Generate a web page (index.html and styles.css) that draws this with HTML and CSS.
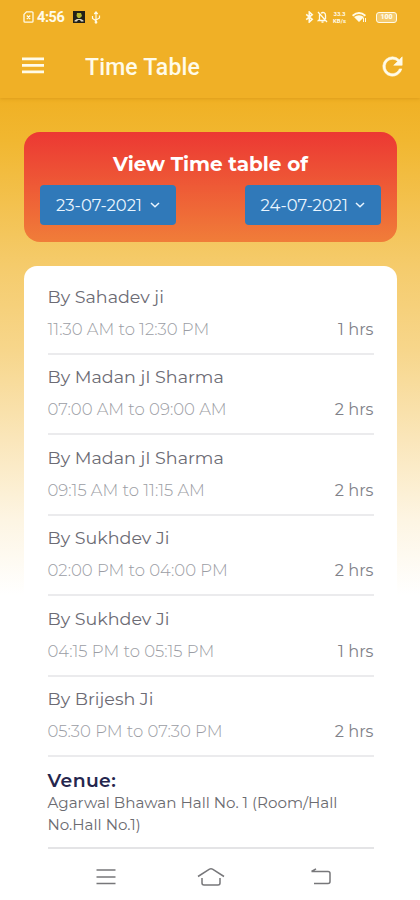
FILE: index.html
```html
<!DOCTYPE html>
<html lang="en">
<head>
<meta charset="utf-8">
<title>Time Table</title>
<link rel="stylesheet" href="styles.css">
</head>
<body>
<div class="screen">
  <header class="top">
    <div class="status">
      <svg class="sim" width="11" height="12" viewBox="0 0 11 12" fill="none" stroke="currentColor" stroke-width="1.3"><path d="M3.5 .8H9a1 1 0 0 1 1 1v8.4a1 1 0 0 1-1 1H2a1 1 0 0 1-1-1V3.4zM3.8 4.5l3.4 3.6M7.2 4.5L3.8 8.1"/></svg>
      <span class="clock">4:56</span>
      <svg class="app" width="12" height="12" viewBox="0 0 12 12"><path fill="#222018" d="M0 0h12v12H0z"/><path fill="#b5b52d" d="M4 2h4l1 3-2 2H5L3.500 5z"/><path fill="#d9d5c5" d="M1.500 9.500L4 8h4l2.500 1.500v1H8L7 9H5l-1 1.500H1.500z"/></svg>
      <svg class="usb" width="10" height="13" viewBox="0 0 10 13" fill="none" stroke="currentColor" stroke-width="1.2"><path d="M5 1.500v10M3.300 3L5 1l1.700 2M1.500 5v2.500L5 9.800M8.500 4.500V7L5 9"/><circle cx="5" cy="11.300" r=".8"/></svg>
      <span class="grow"></span>
      <svg class="bt" width="9" height="12" viewBox="0 0 9 12" fill="none" stroke="currentColor" stroke-width="1.600"><path d="M1.200 3.300l6 5L4.300 11V1l2.900 2.700-6 5"/></svg>
      <svg class="bell" width="11" height="12" viewBox="0 0 11 12" fill="none" stroke="currentColor" stroke-width="1.300"><path d="M1 1l9 10M2.500 3.500V8.500L1.500 9.500H8M4 2.200c2-1.500 4.500-.5 4.500 2V8M4.500 11.200h2"/></svg>
      <span class="rate"><b>33.3</b><b>KB/s</b></span>
      <svg class="wifi" width="15" height="12" viewBox="0 0 15 12"><path fill="currentColor" d="M0 4Q7-2 14 4l-1.200 1.400Q7 .8 1.200 5.400zM2 6Q7 2.300 12 6L7 11z"/><path stroke="currentColor" d="M11.500 7v4M13.500 7v4"/></svg>
      <span class="battery">100</span>
    </div>
    <div class="appbar">
      <svg class="menu" width="22" height="17" viewBox="0 0 22 17" fill="currentColor"><path d="M0 .4h22v2.800H0zM0 7h22v2.800H0zM0 13.500h22v2.800H0z"/></svg>
      <h1>Time Table</h1>
      <svg class="refresh" width="29" height="29" viewBox="0 0 24 24" fill="currentColor" stroke="currentColor" stroke-width=".5"><path d="M17.650 6.350A7.958 7.958 0 0 0 12 4a8 8 0 1 0 7.730 10h-2.080A6 6 0 1 1 12 6c1.660 0 3.140.69 4.220 1.780L13 11h7V4z"/></svg>
    </div>
  </header>
  <section class="range">
    <h2>View Time table of</h2>
    <div class="dates">
      <button><span>23-07-2021</span><svg width="10" height="6" viewBox="0 0 10 6" fill="none" stroke="currentColor" stroke-width="1.500"><path d="M1 1l4 3.800L9 1"/></svg></button>
      <button><span>24-07-2021</span><svg width="10" height="6" viewBox="0 0 10 6" fill="none" stroke="currentColor" stroke-width="1.500"><path d="M1 1l4 3.800L9 1"/></svg></button>
    </div>
  </section>
  <main class="card">
    <article><h3>By Sahadev ji</h3><p><span>11:30 AM to 12:30 PM</span><em>1 hrs</em></p></article>
    <article><h3>By Madan jI Sharma</h3><p><span>07:00 AM to 09:00 AM</span><em>2 hrs</em></p></article>
    <article><h3>By Madan jI Sharma</h3><p><span>09:15 AM to 11:15 AM</span><em>2 hrs</em></p></article>
    <article><h3>By Sukhdev Ji</h3><p><span>02:00 PM to 04:00 PM</span><em>2 hrs</em></p></article>
    <article><h3>By Sukhdev Ji</h3><p><span>04:15 PM to 05:15 PM</span><em>1 hrs</em></p></article>
    <article><h3>By Brijesh Ji</h3><p><span>05:30 PM to 07:30 PM</span><em>2 hrs</em></p></article>
    <div class="venue"><h4>Venue:</h4><div>Agarwal Bhawan Hall No. 1 (Room/Hall<br>No.Hall No.1)</div></div>
  </main>
  <nav class="system">
    <svg width="20" height="18" viewBox="0 0 20 18" fill="none" stroke="currentColor" stroke-width="1.600"><path d="M.5 2h19M.5 9h19M.5 15.500h19"/></svg>
    <svg class="home" width="28" height="20" viewBox="0 0 28 20" fill="none" stroke="currentColor" stroke-width="1.500"><path d="M1 9.500L12.500 2.200q1.500-.8 3 0L27 9.500M5 11v5q0 2 2 2h14q2 0 2-2v-5"/></svg>
    <svg width="22" height="18" viewBox="0 0 22 18" fill="none" stroke="currentColor" stroke-width="1.500"><path d="M1.500 3.500h16.500q2 0 2 2v8q0 2-2 2H4M6 .8L1.500 3.500"/></svg>
  </nav>
</div>
</body>
</html>
```
FILE: styles.css
```css
* { box-sizing: border-box; }
body, h1, h2, h3, h4, p { margin: 0; }
body { background: #fff; font-family: Montserrat, Inter, sans-serif; }
svg { display: block; flex: none; }
.screen {
  width: 420px; height: 900px; overflow: hidden;
  display: flex; flex-direction: column;
  background: linear-gradient(#f0b125 100px, #f1b730 140px, #f5cb6b 265px, #f7d68b 350px, #fae6ba 440px, #fdf5e3 520px, #fff 595px);
}
.top { height: 98px; flex: none; background: #f0b026; color: #fffbe9; box-shadow: 0 1px 3px #c98b1580; font-family: Roboto, sans-serif; }
.status { height: 34px; display: flex; align-items: center; padding: 0 23px; }
.clock { font-size: 14.5px; font-weight: 700; letter-spacing: -.4px; margin: 0 9px 0 3px; }
.usb { margin-left: 6px; }
.grow { flex: 1; }
.bell { margin-left: 3px; }
.rate { display: flex; flex-direction: column; margin-left: 4px; width: 15px; font-size: 6px; line-height: 7px; text-align: center; }
.wifi { margin-left: 5px; }
.battery { margin-left: 9px; width: 21px; height: 11px; border: 1px solid; border-radius: 3px; font-size: 7px; line-height: 9px; font-weight: 900; text-align: center; background: #ffffff55; }
.appbar { height: 64px; display: flex; align-items: center; padding: 0 13px 0 22px; }
.menu { margin-top: -1px; }
h1 { margin-left: 41px; flex: 1; font-size: 23px; line-height: 28px; font-weight: 500; padding-top: 3px; letter-spacing: .15px; }
.range { flex: none; margin: 34px 23px 0 24px; height: 110px; border-radius: 16px; background: linear-gradient(#ec3833, #f07d39); padding: 20px 16px 0; color: #fff; }
h2 { font-size: 20px; line-height: 24px; font-weight: 700; text-align: center; white-space: nowrap; }
.dates { display: flex; justify-content: space-between; margin-top: 9px; }
button { font: 400 16.4px/20px Montserrat, Inter, sans-serif; width: 136px; height: 40px; border: 0; border-radius: 4px; background: #3079b9; color: #e9f5ff; padding: 0 0 0 15.5px; display: flex; align-items: center; gap: 7px; }
button span { width: 87px; white-space: nowrap; }
.card { flex: 1; margin: 23.5px 23px 0 24px; border-radius: 13px 13px 0 0; background: #fff; padding: 8.5px 23.5px 0; }
article { height: 80.5px; border-bottom: 2px solid #ebebed; padding-top: 11.5px; }
h3 { font-size: 17.5px; line-height: 22px; font-weight: 400; color: #6c6b74; }
p { display: flex; justify-content: space-between; margin-top: 10px; line-height: 22px; font-size: 16.5px; color: #9b9da4; font-weight: 300; }
em { font-style: normal; font-weight: 400; font-size: 16.200px; color: #808188; }
.venue { height: 91.500px; border-bottom: 2px solid #e4e4e6; padding-top: 12px; color: #6b6b70; font-size: 15.150px; line-height: 21.500px; white-space: nowrap; }
h4 { font-size: 18.800px; line-height: 23px; font-weight: 600; color: #25264d; letter-spacing: .4px; }
.system { height: 50px; flex: none; background: #fff; color: #77777a; display: flex; align-items: center; justify-content: space-between; padding: 3px 88px 0 96px; }
.home { margin-right: 4px; }
```
